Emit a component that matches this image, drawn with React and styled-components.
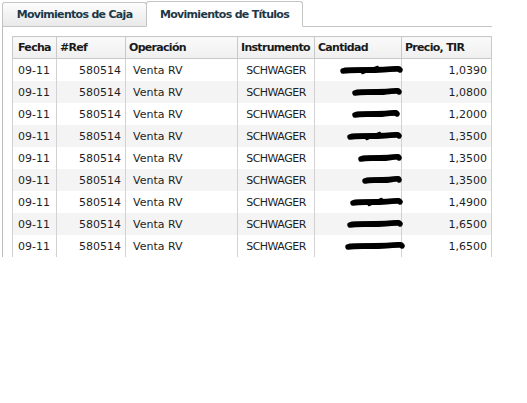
import React from "react";
import styled, { createGlobalStyle } from "styled-components";

const Global = createGlobalStyle`
  html, body { margin: 0; padding: 0; background: #fff; }
  body { font-family: "DejaVu Sans", Verdana, sans-serif; font-size: 11px; color: #1e1e1e; }
`;

const Wrap = styled.div`
  width: 490px;
  margin-left: 2px;
`;

const TabBar = styled.div`
  display: flex;
  align-items: flex-end;
  height: 26px;
  border-bottom: 1px solid #c4c4c4;
`;

const Tab = styled.div`
  box-sizing: border-box;
  display: flex;
  align-items: center;
  justify-content: center;
  font-weight: bold;
  letter-spacing: -0.7px;
  color: #1c3848;
  border: 1px solid #c4c4c4;
  border-radius: 3px 3px 0 0;
  ${(p) =>
    p.$active
      ? `
    width: 157px;
    height: 26px;
    margin-left: -1px;
    margin-bottom: -1px;
    background: #fff;
    border-bottom-color: #fff;
  `
      : `
    width: 145px;
    height: 24px;
    border-bottom: none;
    background: linear-gradient(#fdfdfd, #e9e9e9);
  `}
`;

const Panel = styled.div`
  box-sizing: border-box;
  height: 230px;
  border-left: 1px solid #bdbdbd;
  padding: 9px 0 0 9px;
  overflow: hidden;
`;

const Table = styled.table`
  border-collapse: collapse;
  table-layout: fixed;
  width: 479px;
  border: 1px solid #c8c8c8;
`;

const Th = styled.th`
  height: 21px;
  padding: 0 0 0 ${(p) => (p.$padLeft != null ? p.$padLeft : 3)}px;
  text-align: left;
  font-weight: bold;
  letter-spacing: -0.7px;
  color: #1a1a1a;
  background: linear-gradient(#fafafa, #efefef);
  border: 1px solid #c8c8c8;
  white-space: nowrap;
  overflow: hidden;
`;

const Tr = styled.tr`
  background: ${(p) => (p.$alt ? "#f4f4f4" : "#fff")};
`;

const Td = styled.td`
  height: 22px;
  padding: 0 4px 0 ${(p) => (p.$padLeft != null ? p.$padLeft : 4)}px;
  text-align: ${(p) => p.$align || "left"};
  letter-spacing: ${(p) => (p.$tight ? "-0.5px" : "0")};
  border-left: 1px solid #d2d2d2;
  border-right: 1px solid #d2d2d2;
  white-space: nowrap;
  overflow: visible;
  ${(p) => (p.$flush ? "padding: 0; line-height: 0;" : "")}
`;

const cols = [44, 69, 112, 77, 87, 90];

const scribbles = [
  [26, 87],
  [38, 86],
  [38, 84],
  [33, 86],
  [44, 86],
  [48, 86],
  [36, 87],
  [33, 87],
  [31, 89],
];

const precios = ["1,0390", "1,0800", "1,2000", "1,3500", "1,3500", "1,3500", "1,4900", "1,6500", "1,6500"];

function Scribble({ from, to, seed }) {
  const y = 11;
  const w = to - from;
  const d = `M${from + 2} ${y + 1} C ${from + w * 0.25} ${y - 1}, ${from + w * 0.5} ${y + 1.5}, ${from + w * 0.75} ${y - 0.5} S ${to - 3} ${y - 0.5}, ${to - 2} ${y}`;
  const d2 = `M${from + 4} ${y} L ${to - 4} ${y - 1}`;
  return (
    <svg width="87" height="22" viewBox="0 0 87 22" style={{ display: "block", overflow: "visible" }}>
      <path d={d} stroke="#000" strokeWidth="5.5" fill="none" strokeLinecap="round" />
      <path d={d2} stroke="#000" strokeWidth="5" fill="none" strokeLinecap="round" />
      {seed % 3 === 0 && (
        <path d={`M${from + w * 0.35} ${y + 3} L ${from + w * 0.6} ${y - 3}`} stroke="#000" strokeWidth="2.5" strokeLinecap="round" />
      )}
    </svg>
  );
}

export default function App() {
  return (
    <>
      <Global />
      <Wrap>
        <TabBar>
          <Tab>Movimientos de Caja</Tab>
          <Tab $active>Movimientos de Títulos</Tab>
        </TabBar>
        <Panel>
          <Table>
            <colgroup>
              {cols.map((w, i) => (
                <col key={i} style={{ width: w }} />
              ))}
            </colgroup>
            <thead>
              <tr>
                <Th $padLeft={5}>Fecha</Th>
                <Th>#Ref</Th>
                <Th>Operación</Th>
                <Th>Instrumento</Th>
                <Th>Cantidad</Th>
                <Th>Precio, TIR</Th>
              </tr>
            </thead>
            <tbody>
              {precios.map((p, i) => (
                <Tr key={i} $alt={i % 2 === 1}>
                  <Td $padLeft={5}>09-11</Td>
                  <Td $align="right">580514</Td>
                  <Td $padLeft={7}>Venta RV</Td>
                  <Td $align="center" $tight>SCHWAGER</Td>
                  <Td $flush>
                    <Scribble from={scribbles[i][0]} to={scribbles[i][1]} seed={i} />
                  </Td>
                  <Td $align="right">{p}</Td>
                </Tr>
              ))}
            </tbody>
          </Table>
        </Panel>
      </Wrap>
    </>
  );
}
